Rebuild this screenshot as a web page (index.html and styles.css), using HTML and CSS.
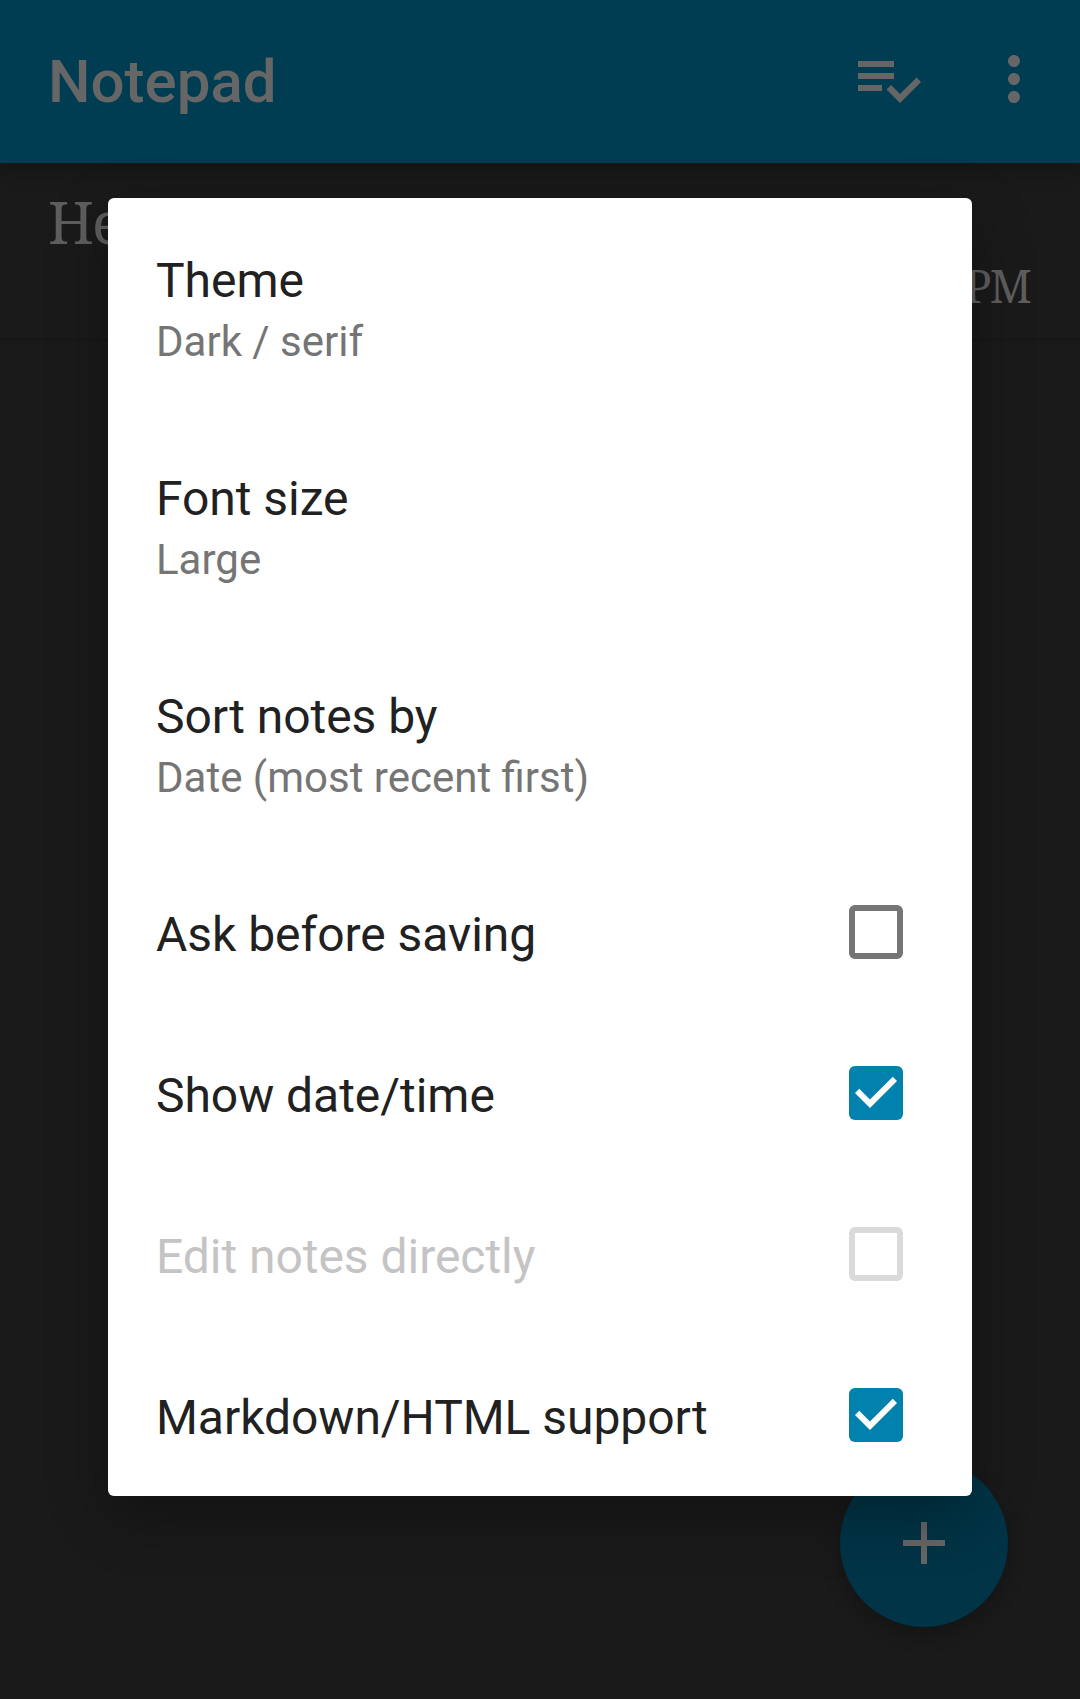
FILE: index.html
```html
<!DOCTYPE html>
<html lang="en">
<head>
<meta charset="utf-8">
<title>Notepad</title>
<link rel="stylesheet" href="styles.css">
</head>
<body>
<div class="screen">
  <header class="app-bar">
    <h1 class="app-title">Notepad</h1>
    <svg class="icon" viewBox="0 0 24 24"><path d="M14 10H2v2h12v-2zm0-4H2v2h12V6zM2 16h8v-2H2v2zm19.5-4.5L23 13l-6.99 7-4.51-4.5L13 14l3.01 3 5.49-5.5z"/></svg>
    <svg class="icon" viewBox="0 0 24 24"><path d="M12 8c1.1 0 2-.9 2-2s-.9-2-2-2-2 .9-2 2 .9 2 2 2zm0 2c-1.1 0-2 .9-2 2s.9 2 2 2 2-.9 2-2-.9-2-2-2zm0 6c-1.1 0-2 .9-2 2s.9 2 2 2 2-.9 2-2-.9-2-2-2z"/></svg>
  </header>
  <div class="note">
    <div class="note-title">He</div>
    <div class="note-date">PM</div>
  </div>
  <div class="fab">
    <svg class="icon" viewBox="0 0 24 24"><path d="M19 13h-6v6h-2v-6H5v-2h6V5h2v6h6v2z"/></svg>
  </div>
  <div class="overlay">
    <div class="dialog">
      <div class="pref">
        <div class="pref-title">Theme</div>
        <div class="pref-summary">Dark / serif</div>
      </div>
      <div class="pref">
        <div class="pref-title">Font size</div>
        <div class="pref-summary">Large</div>
      </div>
      <div class="pref">
        <div class="pref-title">Sort notes by</div>
        <div class="pref-summary">Date (most recent first)</div>
      </div>
      <div class="pref toggle">
        <div class="pref-title">Ask before saving</div>
        <div class="checkbox"></div>
      </div>
      <div class="pref toggle">
        <div class="pref-title">Show date/time</div>
        <div class="checkbox checked"><svg class="tick" viewBox="3 3 18 18"><path d="M10 17l-5-5 1.41-1.41L10 14.17l7.59-7.59L19 8z"/></svg></div>
      </div>
      <div class="pref toggle disabled">
        <div class="pref-title">Edit notes directly</div>
        <div class="checkbox"></div>
      </div>
      <div class="pref toggle">
        <div class="pref-title">Markdown/HTML support</div>
        <div class="checkbox checked"><svg class="tick" viewBox="3 3 18 18"><path d="M10 17l-5-5 1.41-1.41L10 14.17l7.59-7.59L19 8z"/></svg></div>
      </div>
    </div>
  </div>
</div>
</body>
</html>
```
FILE: styles.css
```css
* {
  box-sizing: border-box;
}

body {
  margin: 0;
  background: #1a1a1a;
  font-family: Roboto, sans-serif;
}

.screen {
  position: relative;
  height: 1699px;
  overflow: hidden;
}

.app-bar {
  position: relative;
  display: flex;
  align-items: center;
  gap: 54px;
  height: 163px;
  padding: 0 30px 5px 48px;
  background: #003d52;
  box-shadow: 0 6px 20px rgba(0, 0, 0, 0.25);
}

.app-title {
  flex: 1;
  margin: 6px 0 0;
  font-size: 60px;
  font-weight: 500;
  line-height: 70px;
  color: #666;
}

.icon {
  display: block;
  width: 72px;
  height: 72px;
  fill: #666;
}

.note {
  height: 178px;
  padding: 24px 48px 0;
  border-bottom: 3px solid #171717;
  font-family: "Noto Serif", "Liberation Serif", serif;
  color: #5e5e5e;
}

.note-title {
  font-size: 58px;
  line-height: 70px;
  letter-spacing: -2px;
}

.note-date {
  margin: 1px 2px 0 0;
  font-size: 45px;
  line-height: 56px;
  letter-spacing: -2px;
  text-align: right;
}

.fab {
  position: absolute;
  right: 72px;
  bottom: 72px;
  display: grid;
  place-items: center;
  width: 168px;
  height: 168px;
  border-radius: 50%;
  background: #003446;
  box-shadow: 0 9px 18px rgba(0, 0, 0, 0.22);
}

.overlay {
  position: absolute;
  inset: 0;
  padding: 198px 108px 203px;
}

.dialog {
  border-radius: 6px;
  background: #fff;
  box-shadow: 0 20px 60px rgba(0, 0, 0, 0.3);
}

.pref {
  height: 218px;
  padding: 55px 48px 0;
}

.pref-title {
  font-size: 48px;
  line-height: 56px;
  letter-spacing: -0.04px;
  color: #212121;
}

.pref-summary {
  margin-top: 8px;
  font-size: 42px;
  line-height: 50px;
  color: #757575;
}

.toggle {
  display: flex;
  align-items: center;
  justify-content: space-between;
  height: 161px;
  padding: 0 69px 1px 48px;
}

.toggle .pref-title {
  padding-top: 5px;
}

.checkbox {
  width: 54px;
  height: 54px;
  border: 6px solid #757575;
  border-radius: 6px;
}

.checked {
  border: 0;
  background: #0081ae;
}

.tick {
  display: block;
  fill: #fff;
}

.disabled .pref-title {
  color: #c4c4c4;
}

.disabled .checkbox {
  border-color: #dadada;
}
```
